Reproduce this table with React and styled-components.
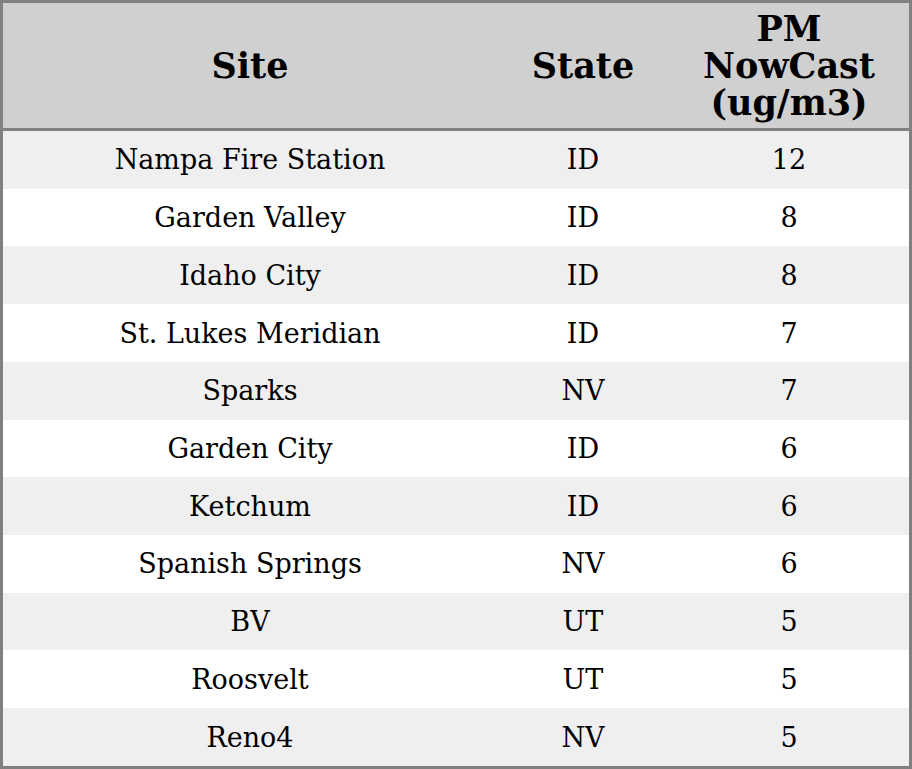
import React from 'react';
import styled, { createGlobalStyle } from 'styled-components';

const GlobalStyle = createGlobalStyle`
    html, body {
        margin: 0;
        padding: 0;
        background: #ffffff;
    }
    body {
        font-family: "DejaVu Serif", serif;
        color: #000;
    }
`;

const Table = styled.table`
    width: 912px;
    border-collapse: collapse;
    border: 3px solid #808080;
    font-family: "DejaVu Serif", serif;
`;

const HeadCell = styled.th`
    background-color: #d0d0d0;
    border-bottom: 3px solid #808080;
    font-size: 35px;
    font-weight: bold;
    line-height: 37px;
    text-align: center;
    padding: 7px 0 7px;
    height: 110px;
    width: ${props => props.width}px;
`;

const Row = styled.tr`
    background-color: ${props => (props.odd ? '#efefef' : '#ffffff')};
`;

const Cell = styled.td`
    font-size: 27px;
    text-align: center;
    height: 57.73px;
    padding: 0;
`;

const rows = [
    ['Nampa Fire Station', 'ID', '12'],
    ['Garden Valley', 'ID', '8'],
    ['Idaho City', 'ID', '8'],
    ['St. Lukes Meridian', 'ID', '7'],
    ['Sparks', 'NV', '7'],
    ['Garden City', 'ID', '6'],
    ['Ketchum', 'ID', '6'],
    ['Spanish Springs', 'NV', '6'],
    ['BV', 'UT', '5'],
    ['Roosvelt', 'UT', '5'],
    ['Reno4', 'NV', '5'],
];

export default function App() {
    return (
        <>
            <GlobalStyle />
            <Table>
                <thead>
                    <tr>
                        <HeadCell width={494}>Site</HeadCell>
                        <HeadCell width={172}>State</HeadCell>
                        <HeadCell width={240}>
                            PM
                            <br />
                            NowCast
                            <br />
                            (ug/m3)
                        </HeadCell>
                    </tr>
                </thead>
                <tbody>
                    {rows.map(([site, state, value], i) => (
                        <Row key={site} odd={i % 2 === 0}>
                            <Cell>{site}</Cell>
                            <Cell>{state}</Cell>
                            <Cell>{value}</Cell>
                        </Row>
                    ))}
                </tbody>
            </Table>
        </>
    );
}
